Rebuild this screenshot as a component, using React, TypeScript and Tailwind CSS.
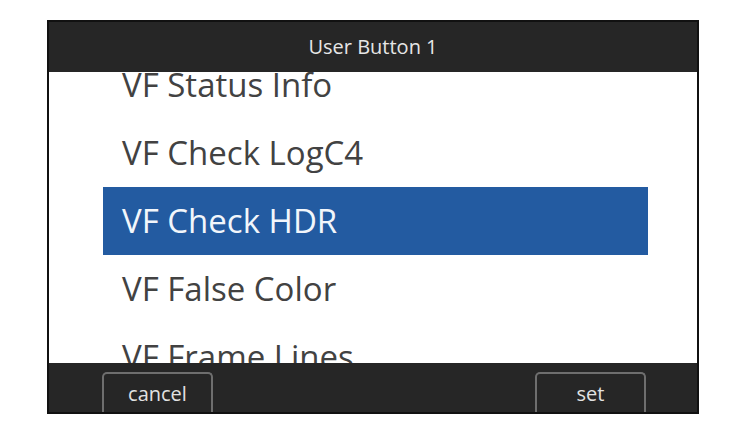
import React from "react";

const items = [
  "VF Status Info",
  "VF Check LogC4",
  "VF Check HDR",
  "VF False Color",
  "VF Frame Lines",
];

export default function App() {
  const selected = 2;

  return (
    <div className="w-[740px] h-[441px] bg-white pt-[20px] pl-[47px]" style={{ fontFamily: '"Open Sans", "Noto Sans", sans-serif' }}>
      <div className="w-[652px] h-[394px] border-2 border-[#111] flex flex-col">
        {/* Title bar */}
        <div className="h-[50px] bg-[#262626] flex items-center justify-center text-[20px] text-[#e6e6e6]">
          User Button 1
        </div>

        {/* List */}
        <div className="flex-1 overflow-hidden bg-white">
          <div className="mt-[-21px]">
            {items.map((label, i) => (
              <div
                key={label}
                className={
                  i === selected
                    ? "ml-[54px] w-[545px] h-[68px] flex items-center pl-[19px] bg-[#235ba1] text-[#f2f6fb] text-[33px]"
                    : "ml-[54px] w-[545px] h-[68px] flex items-center pl-[19px] text-[#424242] text-[33px]"
                }
              >
                {label}
              </div>
            ))}
          </div>
        </div>

        {/* Bottom buttons */}
        <div className="h-[49px] bg-[#262626] flex items-end justify-between pl-[53px] pr-[51px]">
          <button className="w-[111px] h-[40px] border-2 border-b-0 border-[#6e6e6e] rounded-t-[5px] text-[20px] text-[#e2e2e2] pt-[1px]">
            cancel
          </button>
          <button className="w-[111px] h-[40px] border-2 border-b-0 border-[#6e6e6e] rounded-t-[5px] text-[20px] text-[#e2e2e2] pt-[1px]">
            set
          </button>
        </div>
      </div>
    </div>
  );
}
